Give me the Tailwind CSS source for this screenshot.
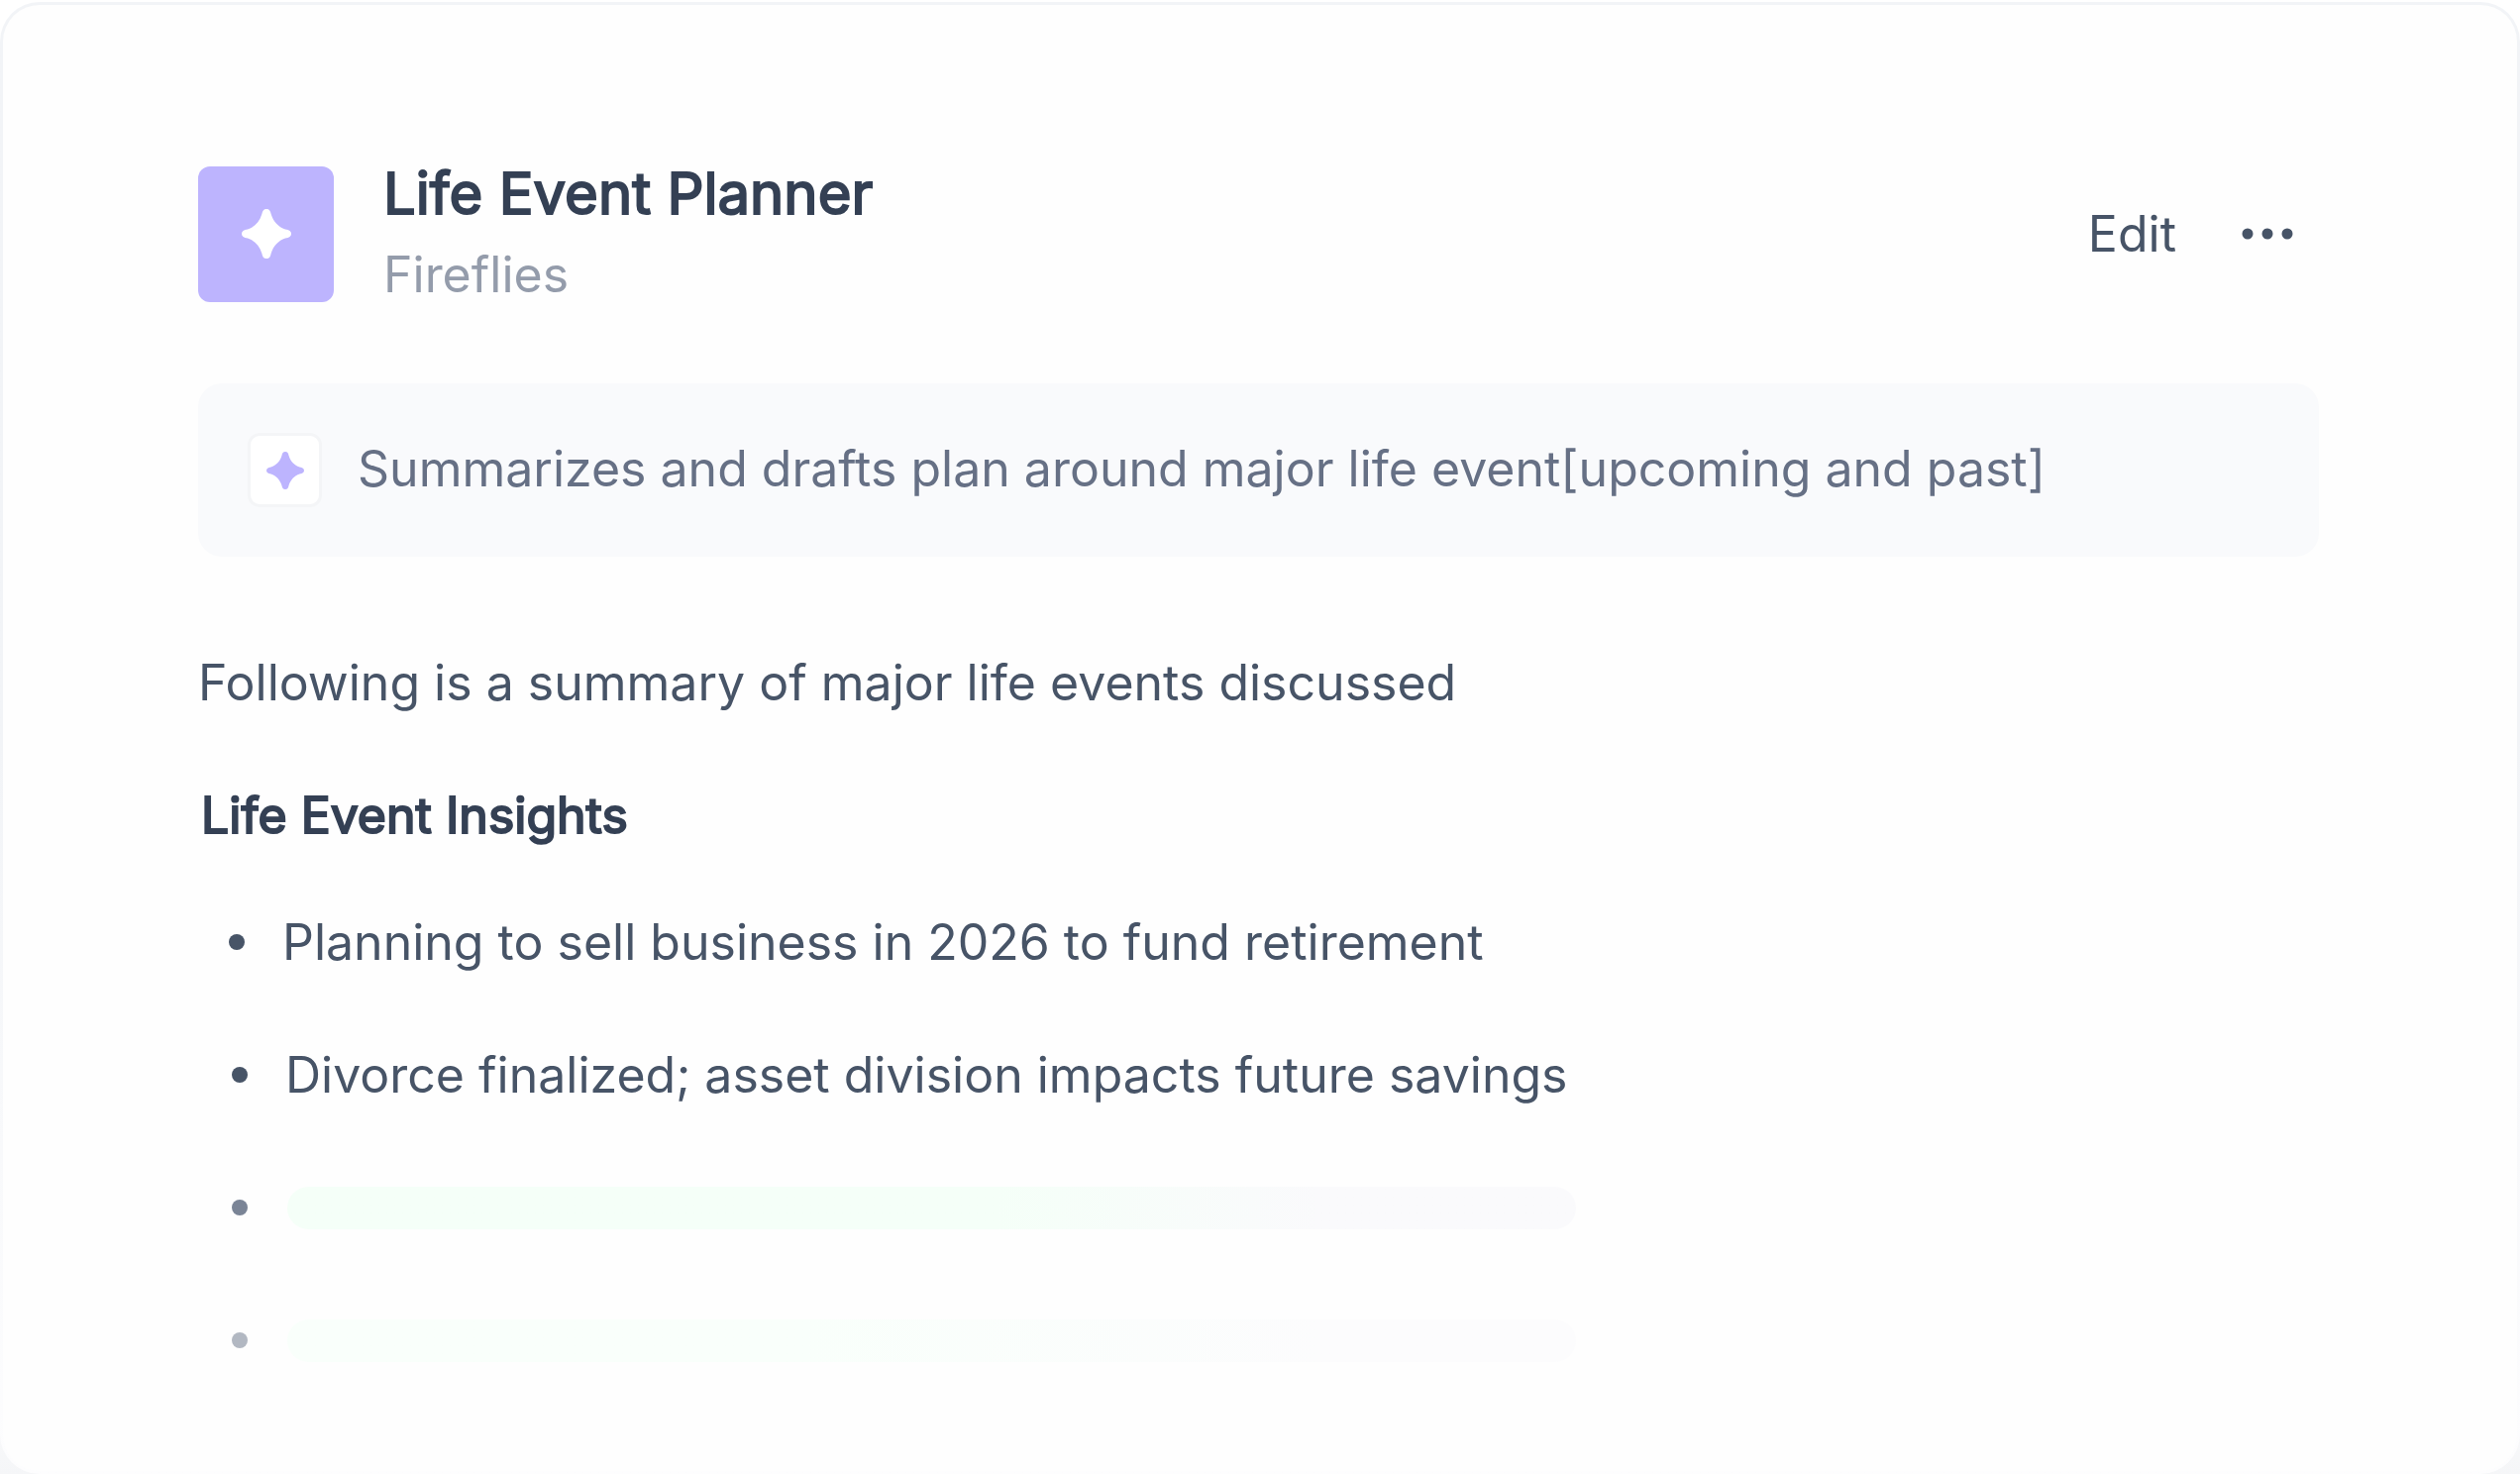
<!DOCTYPE html>
<html lang="en">
<head>
<meta charset="utf-8">
<title>Life Event Planner</title>
<script src="https://cdn.jsdelivr.net/npm/@tailwindcss/browser@4"></script>
</head>
<body class="bg-linear-to-b from-white from-90% to-[#f5f6f8] font-[Inter,sans-serif]">
<div class="flex min-h-screen flex-col pt-[2px]">
<div class="flex grow flex-col rounded-[40px] bg-linear-to-b from-[#f2f4f7] from-50% to-[#fdfdfe] p-[3px]">
<main class="grow rounded-[37px] bg-[#fefefe] pt-40 pr-[200px] pl-[197px] text-[50px] leading-[60px] text-[#475467]">
  <header class="flex items-center gap-[50px]">
    <div class="flex size-[137px] shrink-0 items-center justify-center rounded-xl bg-[#bdb4fe]">
      <svg class="size-[50px] text-white" viewBox="0 0 50 50" fill="currentColor" aria-hidden="true"><path d="M25 0C28 0 29 2 29.600 5C32 13 37 18 44 20.500C48 21 50 22.500 50 25C50 27.500 48 29 44 29.500C37 32 32 37 29.600 45C29 48 28 50 25 50C22 50 21 48 20.400 45C18 37 13 32 6 29.500C2 29 0 27.500 0 25C0 22.500 2 21 6 20.500C13 18 18 13 20.400 5C21 2 22 0 25 0Z"/></svg>
    </div>
    <div class="flex-1">
      <h1 class="text-[58px] leading-[60px] font-normal text-[#344054] [-webkit-text-stroke:2px_#344054]">Life Event Planner</h1>
      <p class="mt-[22px] text-[#949cab]">Fireflies</p>
    </div>
    <div class="mr-[26px] flex items-center gap-[66px]">
      <button type="button">Edit</button>
      <button type="button" aria-label="More"><svg class="h-4 w-[52px]" viewBox="0 0 52 16" fill="currentColor"><circle cx="6" cy="8" r="5.500"/><circle cx="26" cy="8" r="5.500"/><circle cx="46" cy="8" r="5.500"/></svg></button>
    </div>
  </header>
  <section class="mt-20 flex h-[175px] items-center gap-9 rounded-3xl bg-[#f9fafc] px-[50px] text-[#667085]">
    <div class="flex size-[75px] shrink-0 items-center justify-center rounded-xl border-3 border-[#f4f5f7] bg-white">
      <svg class="size-[38px] text-[#bdb4fe]" viewBox="0 0 50 50" fill="currentColor" aria-hidden="true"><path d="M25 0C28 0 29 2 29.600 5C32 13 37 18 44 20.500C48 21 50 22.500 50 25C50 27.500 48 29 44 29.500C37 32 32 37 29.600 45C29 48 28 50 25 50C22 50 21 48 20.400 45C18 37 13 32 6 29.500C2 29 0 27.500 0 25C0 22.500 2 21 6 20.500C13 18 18 13 20.400 5C21 2 22 0 25 0Z"/></svg>
    </div>
    <p class="pb-1">Summarizes and drafts plan around major life event[upcoming and past]</p>
  </section>
  <p class="mt-[97px]">Following is a summary of major life events discussed</p>
  <h2 class="mt-[74px] pl-[3px] font-normal text-[#344054] [-webkit-text-stroke:2px_#344054]">Life Event Insights</h2>
  <ul class="mt-[68px] flex flex-col gap-[74px] pb-20 pl-[31px]">
    <li class="flex items-center gap-[38px]"><span class="size-4 rounded-full bg-current"></span>Planning to sell business in 2026 to fund retirement</li>
    <li class="flex items-center gap-[38px] pl-[3px]"><span class="size-4 rounded-full bg-current"></span>Divorce finalized; asset division impacts future savings</li>
    <li class="flex h-[60px] items-center gap-10 pl-[3px]"><span class="size-4 rounded-full bg-[#7a8496]"></span><span class="h-[43px] w-full max-w-[1301px] rounded-full bg-linear-to-r from-[#f5fff8] from-55% to-[#fafafc] to-80%"></span></li>
    <li class="flex h-[60px] items-center gap-10 pl-[3px]"><span class="size-4 rounded-full bg-[#b2b8c2]"></span><span class="h-[43px] w-full max-w-[1301px] rounded-full bg-linear-to-r from-[#f9fffb] from-40% to-[#fcfcfd] to-80%"></span></li>
  </ul>
</main>
</div>
</div>
</body>
</html>
